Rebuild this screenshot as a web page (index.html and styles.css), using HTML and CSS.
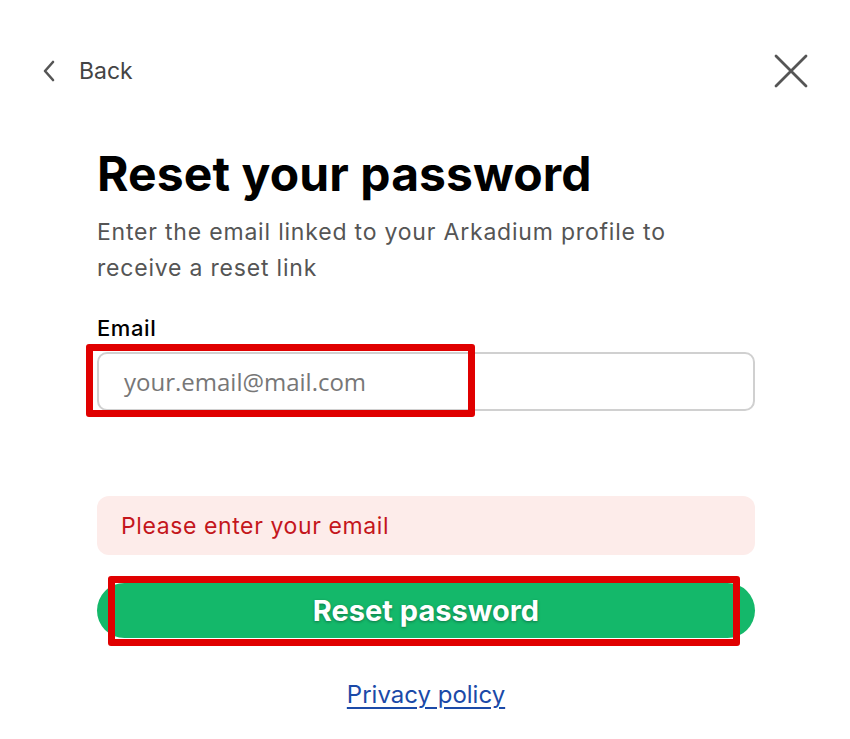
FILE: index.html
```html
<!DOCTYPE html>
<html>
<head>
<meta charset="utf-8">
<link rel="stylesheet" href="styles.css">
</head>
<body>
<div class="page">
  <div class="topbar">
    <button class="back">
      <svg class="chev" width="16" height="22" viewBox="0 0 16 22"><path d="M12 2 L4 11 L12 20" fill="none" stroke="#555" stroke-width="2.6" stroke-linecap="round" stroke-linejoin="round"/></svg>
      <span>Back</span>
    </button>
    <svg class="close" width="36" height="36" viewBox="0 0 36 36"><path d="M3 3 L33 33 M33 3 L3 33" stroke="#555" stroke-width="2.8" stroke-linecap="round"/></svg>
  </div>
  <main class="content">
    <h1 class="title">Reset your password</h1>
    <p class="subtitle">Enter the email linked to your Arkadium profile to receive a reset link</p>
    <label class="label">Email</label>
    <div class="field">
      <div class="input"><span class="placeholder">your.email@mail.com</span></div>
      <div class="mark mark-input"></div>
    </div>
    <div class="error">Please enter your email</div>
    <div class="btnwrap">
      <button class="submit">Reset password</button>
      <div class="mark mark-btn"></div>
    </div>
    <a class="privacy" href="#">Privacy policy</a>
  </main>
</div>
</body>
</html>
```
FILE: styles.css
```css
* { box-sizing: border-box; }
html, body { margin: 0; padding: 0; background: #fff; }
body { font-family: "Inter", "Liberation Sans", sans-serif; width: 850px; height: 739px; overflow: hidden; }
.page { padding: 0; }
.topbar { display: flex; justify-content: space-between; align-items: center; padding: 54px 41px 0 41px; height: 88px; }
.back { display: flex; align-items: center; gap: 22px; background: none; border: 0; padding: 0; font-family: inherit; font-size: 23px; color: #444; cursor: pointer; }
.chev { display: block; }
.close { display: block; margin-top: 0; }
.content { padding: 56px 95px 0 97px; display: flex; flex-direction: column; }
.title { margin: 0; font-size: 48px; font-weight: 700; color: #000; line-height: 60px; letter-spacing: 0.1px; }
.subtitle { margin: 10px 0 0 0; font-size: 23px; line-height: 36px; color: #555; max-width: 600px; letter-spacing: 0.8px; }
.label { margin-top: 27px; font-size: 22px; color: #000; line-height: 30px; font-weight: 500; letter-spacing: 0.6px; }
.field { position: relative; margin-top: 9px; }
.input { height: 59px; border: 2px solid #d0d0d0; border-radius: 10px; display: flex; align-items: center; padding-left: 25px; }
.placeholder { font-family: "Open Sans", "Noto Sans", sans-serif; font-size: 24px; color: #777; }
.mark { position: absolute; border: 7px solid #e00000; border-radius: 3px; }
.mark-input { left: -11px; top: -8px; width: 389px; height: 73px; }
.error { margin-top: 85px; height: 59px; background: #fdecea; border-radius: 12px; display: flex; align-items: center; padding-left: 24px; font-size: 23px; color: #c4161c; letter-spacing: 0.6px; }
.btnwrap { position: relative; margin-top: 28px; }
.submit { width: 100%; height: 55px; border: 0; border-radius: 28px; background: #14b86a; color: #fff; font-family: inherit; font-size: 29px; font-weight: 700; text-shadow: 0 1px 3px rgba(0,0,0,0.35); display: block; }
.mark-btn { left: 11px; top: -7px; width: 632px; height: 70px; }
.privacy { align-self: center; margin-top: 42px; font-size: 24px; color: #1b4aa8; text-decoration: underline; text-underline-offset: 4px; }
```
